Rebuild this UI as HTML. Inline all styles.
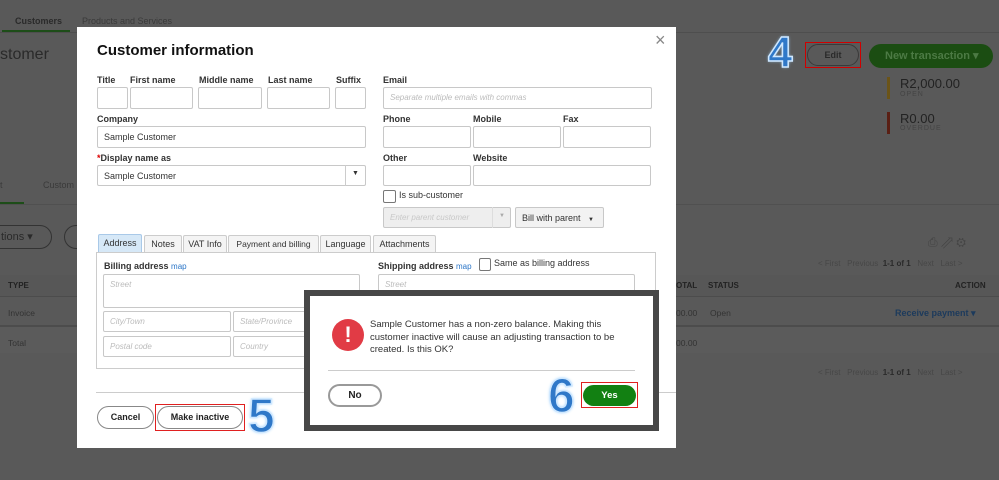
<!DOCTYPE html>
<html style="background:#595959"><head><meta charset="utf-8"><style>
*{box-sizing:border-box;margin:0;padding:0}
html,body{background:#595959}
body{width:999px;height:480px;overflow:hidden;font-family:"Liberation Sans",sans-serif;position:relative;color:#222}
.a{position:absolute}
.lbl{position:absolute;font-size:9px;font-weight:bold;color:#333;white-space:nowrap}
.in{position:absolute;border:1px solid #c8c8c8;background:#fff;border-radius:2px;font-size:9px;color:#bbb;font-style:italic;padding:5px 6px;white-space:nowrap;overflow:hidden}
.v{font-style:normal;color:#333}
.tab{position:absolute;top:235px;height:17px;border:1px solid #ccc;border-bottom:none;background:#f4f4f4;font-size:9px;color:#333;padding:3px 3px;border-radius:2px 2px 0 0;white-space:nowrap;overflow:hidden;text-align:center}
.big{position:absolute;font-weight:bold;font-family:"Liberation Sans",sans-serif;color:#2f78c8;-webkit-text-stroke:1.5px #cfe8ff;text-shadow:0 0 3px #9cd0ff}
</style></head><body>
<div class="a" style="left:0;top:0;width:999px;height:480px;background:#595959"></div>
<div class="a" style="left:15px;top:16px;font-size:9px;font-weight:bold;color:#2a2a2a">Customers</div>
<div class="a" style="left:82px;top:16px;font-size:9px;color:#3a3a3a">Products and Services</div>
<div class="a" style="left:2px;top:30px;width:68px;height:2px;background:#1d4d18"></div>
<div class="a" style="left:0;top:32px;width:999px;height:1px;background:#4e4e4e"></div>
<div class="a" style="left:0;top:46px;font-size:16px;color:#2a2a2a">stomer</div>
<div class="a" style="left:807px;top:44px;width:52px;height:22px;border:1px solid #3a3a3a;border-radius:12px;font-size:9px;font-weight:bold;color:#2a2a2a;text-align:center;line-height:20px">Edit</div>
<div class="a" style="left:805px;top:42px;width:56px;height:26px;border:1.5px solid #d00000"></div>
<div class="big" style="left:768px;top:30px;font-size:44px;line-height:46px">4</div>
<div class="a" style="left:869px;top:44px;width:124px;height:24px;background:#1b4d12;border-radius:12px;color:#4c7a44;font-size:11px;font-weight:bold;line-height:24px;padding-left:16px;white-space:nowrap">New transaction &#9662;</div>
<div class="a" style="left:887px;top:77px;width:3px;height:22px;background:#6b5418"></div>
<div class="a" style="left:900px;top:76px;font-size:13px;color:#222">R2,000.00</div>
<div class="a" style="left:900px;top:91px;font-size:7px;color:#444;letter-spacing:1px">OPEN</div>
<div class="a" style="left:887px;top:112px;width:3px;height:22px;background:#5a1f14"></div>
<div class="a" style="left:900px;top:111px;font-size:13px;color:#222">R0.00</div>
<div class="a" style="left:900px;top:125px;font-size:7px;color:#444;letter-spacing:1px">OVERDUE</div>
<div class="a" style="left:0;top:204px;width:999px;height:1px;background:#505050"></div>
<div class="a" style="left:0;top:180px;font-size:9px;color:#3a3a3a">t</div>
<div class="a" style="left:43px;top:180px;font-size:9px;color:#3a3a3a">Custom</div>
<div class="a" style="left:0;top:202px;width:24px;height:2px;background:#1d4d18"></div>
<div class="a" style="left:-20px;top:225px;width:72px;height:24px;border:1px solid #333;border-radius:12px;font-size:11px;color:#2a2a2a;line-height:22px;padding-left:20px">tions &#9662;</div>
<div class="a" style="left:64px;top:225px;width:30px;height:24px;border:1px solid #333;border-radius:12px"></div>
<div class="a" style="left:0;top:275px;width:999px;height:22px;background:#575757;border-bottom:1px solid #4c4c4c"></div>
<div class="a" style="left:8px;top:281px;font-size:8px;font-weight:bold;color:#222">TYPE</div>
<div class="a" style="left:8px;top:308px;font-size:8.5px;color:#333">Invoice</div>
<div class="a" style="left:0;top:325px;width:999px;height:2px;background:#4c4c4c"></div>
<div class="a" style="left:0;top:327px;width:999px;height:26px;background:#5b5b5b"></div>
<div class="a" style="left:8px;top:338px;font-size:8.5px;color:#333">Total</div>
<div class="a" style="left:676px;top:281px;font-size:8px;font-weight:bold;color:#222">OTAL</div>
<div class="a" style="left:708px;top:281px;font-size:8px;font-weight:bold;color:#222">STATUS</div>
<div class="a" style="left:955px;top:281px;font-size:8px;font-weight:bold;color:#222">ACTION</div>
<div class="a" style="left:676px;top:308px;font-size:8.5px;color:#333">00.00</div>
<div class="a" style="left:710px;top:308px;font-size:8.5px;color:#333">Open</div>
<div class="a" style="left:895px;top:308px;font-size:9px;font-weight:bold;color:#1c3a5c;white-space:nowrap">Receive payment &#9662;</div>
<div class="a" style="left:676px;top:338px;font-size:8.5px;color:#333">00.00</div>
<div class="a" style="left:818px;top:259px;font-size:8px;color:#474747;white-space:nowrap">&lt; First &nbsp; Previous &nbsp;<b style="color:#2a2a2a">1-1 of 1</b>&nbsp; &nbsp;Next &nbsp; Last &gt;</div>
<div class="a" style="left:818px;top:368px;font-size:8px;color:#474747;white-space:nowrap">&lt; First &nbsp; Previous &nbsp;<b style="color:#2a2a2a">1-1 of 1</b>&nbsp; &nbsp;Next &nbsp; Last &gt;</div>
<div class="a" style="left:928px;top:235px;font-size:12px;color:#444">&#9113; &#8663; &#9881;</div>

<div class="a" style="left:77px;top:27px;width:599px;height:421px;background:#fff"></div>
<div class="a" style="left:655px;top:30px;font-size:18px;color:#888">&#215;</div>
<div class="a" style="left:97px;top:42px;font-size:15px;font-weight:bold;color:#111">Customer information</div>
<div class="lbl" style="left:97px;top:75px">Title</div>
<div class="lbl" style="left:130px;top:75px">First name</div>
<div class="lbl" style="left:199px;top:75px">Middle name</div>
<div class="lbl" style="left:268px;top:75px">Last name</div>
<div class="lbl" style="left:336px;top:75px">Suffix</div>
<div class="in" style="left:97px;top:87px;width:31px;height:22px"></div>
<div class="in" style="left:130px;top:87px;width:63px;height:22px"></div>
<div class="in" style="left:198px;top:87px;width:64px;height:22px"></div>
<div class="in" style="left:267px;top:87px;width:63px;height:22px"></div>
<div class="in" style="left:335px;top:87px;width:31px;height:22px"></div>
<div class="lbl" style="left:97px;top:114px">Company</div>
<div class="in" style="left:97px;top:126px;width:269px;height:22px"><span class="v">Sample Customer</span></div>
<div class="lbl" style="left:97px;top:153px"><span style="color:#d00">*</span>Display name as</div>
<div class="in" style="left:97px;top:165px;width:269px;height:21px"><span class="v">Sample Customer</span></div>
<div class="a" style="left:345px;top:165px;width:1px;height:21px;background:#ccc"></div>
<div class="a" style="left:352px;top:170px;font-size:7px;color:#333">&#9660;</div>
<div class="lbl" style="left:383px;top:75px">Email</div>
<div class="in" style="left:383px;top:87px;width:269px;height:22px;font-size:8px">Separate multiple emails with commas</div>
<div class="lbl" style="left:383px;top:114px">Phone</div>
<div class="lbl" style="left:473px;top:114px">Mobile</div>
<div class="lbl" style="left:563px;top:114px">Fax</div>
<div class="in" style="left:383px;top:126px;width:88px;height:22px"></div>
<div class="in" style="left:473px;top:126px;width:88px;height:22px"></div>
<div class="in" style="left:563px;top:126px;width:88px;height:22px"></div>
<div class="lbl" style="left:383px;top:153px">Other</div>
<div class="lbl" style="left:473px;top:153px">Website</div>
<div class="in" style="left:383px;top:165px;width:88px;height:21px"></div>
<div class="in" style="left:473px;top:165px;width:178px;height:21px"></div>
<div class="a" style="left:383px;top:190px;width:13px;height:13px;border:1px solid #777;border-radius:2px"></div>
<div class="a" style="left:399px;top:190px;font-size:9px;color:#333">Is sub-customer</div>
<div class="in" style="left:383px;top:207px;width:128px;height:21px;background:#eee;font-size:8px;color:#c8c8c8">Enter parent customer</div>
<div class="a" style="left:492px;top:207px;width:1px;height:21px;background:#ddd"></div>
<div class="a" style="left:499px;top:213px;font-size:6px;color:#aaa">&#9660;</div>
<div class="in" style="left:515px;top:207px;width:89px;height:21px;background:#f2f2f2"><span class="v">Bill with parent &nbsp; <span style="font-size:6px">&#9660;</span></span></div>

<div class="tab" style="left:98px;width:44px;background:#d6e8f7;border-color:#a9c9e8;height:18px;top:234px">Address</div>
<div class="tab" style="left:144px;width:38px">Notes</div>
<div class="tab" style="left:183px;width:44px">VAT Info</div>
<div class="tab" style="left:228px;width:91px;font-size:8.5px">Payment and billing</div>
<div class="tab" style="left:320px;width:51px">Language</div>
<div class="tab" style="left:373px;width:63px">Attachments</div>
<div class="a" style="left:96px;top:252px;width:560px;height:117px;border:1px solid #ccc"></div>
<div class="lbl" style="left:104px;top:261px">Billing address <span style="color:#2a75c7;font-weight:normal;font-size:8px">map</span></div>
<div class="in" style="left:103px;top:274px;width:257px;height:34px;font-size:8px">Street</div>
<div class="in" style="left:103px;top:311px;width:128px;height:21px;font-size:8px">City/Town</div>
<div class="in" style="left:233px;top:311px;width:128px;height:21px;font-size:8px">State/Province</div>
<div class="in" style="left:103px;top:336px;width:128px;height:21px;font-size:8px">Postal code</div>
<div class="in" style="left:233px;top:336px;width:128px;height:21px;font-size:8px">Country</div>
<div class="lbl" style="left:378px;top:261px">Shipping address <span style="color:#2a75c7;font-weight:normal;font-size:8px">map</span></div>
<div class="a" style="left:479px;top:258px;width:12px;height:13px;border:1px solid #777;border-radius:2px"></div>
<div class="a" style="left:494px;top:258px;font-size:9px;color:#333;white-space:nowrap">Same as billing address</div>
<div class="in" style="left:378px;top:274px;width:257px;height:34px;font-size:8px">Street</div>
<div class="a" style="left:96px;top:392px;width:580px;height:1px;background:#ccc"></div>
<div class="a" style="left:97px;top:406px;width:57px;height:23px;border:1px solid #888;border-radius:12px;font-size:9px;font-weight:bold;text-align:center;line-height:21px;color:#222">Cancel</div>
<div class="a" style="left:157px;top:406px;width:86px;height:23px;border:1px solid #888;border-radius:12px;font-size:9px;font-weight:bold;text-align:center;line-height:21px;color:#222">Make inactive</div>
<div class="a" style="left:155px;top:404px;width:90px;height:27px;border:1.5px solid #e02020"></div>
<div class="big" style="left:248px;top:392px;font-size:48px;line-height:50px">5</div>

<div class="a" style="left:304px;top:290px;width:355px;height:141px;background:#474747"></div>
<div class="a" style="left:310px;top:296px;width:343px;height:129px;background:#fff"></div>
<div class="a" style="left:332px;top:319px;width:32px;height:32px;border-radius:50%;background:#e13b45;color:#fff;font-weight:bold;font-size:22px;text-align:center;line-height:32px">!</div>
<div class="a" style="left:370px;top:319px;width:260px;font-size:9.5px;line-height:12.5px;color:#333">Sample Customer has a non-zero balance. Making this customer inactive will cause an adjusting transaction to be created. Is this OK?</div>
<div class="a" style="left:328px;top:370px;width:307px;height:1px;background:#ccc"></div>
<div class="a" style="left:328px;top:384px;width:54px;height:23px;border:2px solid #999;border-radius:12px;font-size:10px;font-weight:bold;text-align:center;line-height:19px;color:#222">No</div>
<div class="a" style="left:583px;top:385px;width:53px;height:21px;background:#128012;border-radius:11px;font-size:9.5px;font-weight:bold;text-align:center;line-height:21px;color:#fff">Yes</div>
<div class="a" style="left:581px;top:382px;width:57px;height:26px;border:1.5px solid #e02020"></div>
<div class="big" style="left:548px;top:372px;font-size:48px;line-height:50px">6</div>
</body></html>
